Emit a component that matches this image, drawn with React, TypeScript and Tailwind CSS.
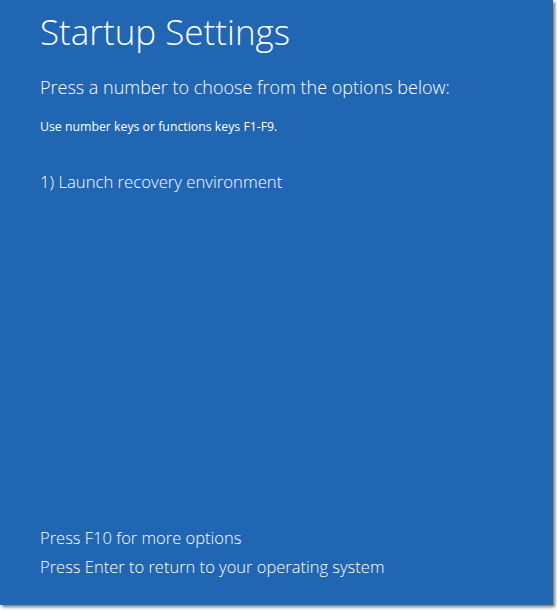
import React from "react";

export default function App() {
  const font = { fontFamily: '"Open Sans", "Noto Sans", sans-serif' };
  return (
    <div className="w-[557px] h-[611px] bg-white relative overflow-hidden">
      <div
        className="w-[553px] h-[605px] bg-[#2166b2] text-white flex flex-col pl-[40px] shadow-[2px_2px_3px_rgba(0,0,0,0.55)]"
        style={font}
      >
        <div className="mt-[10px] text-[35px] font-light leading-[44px]">Startup Settings</div>
        <div className="mt-[21px] text-[18px] font-light leading-[24px]">Press a number to choose from the options below:</div>
        <div className="mt-[20px] text-[12.3px] font-normal leading-[16px]">Use number keys or functions keys F1-F9.</div>
        <div className="mt-[35px] text-[16.7px] font-light leading-[24px]">1) Launch recovery environment</div>
        <div className="mt-auto text-[16.5px] font-light leading-[29px]">Press F10 for more options</div>
        <div className="mb-[24px] text-[16.5px] font-light leading-[29px]">Press Enter to return to your operating system</div>
      </div>
    </div>
  );
}
